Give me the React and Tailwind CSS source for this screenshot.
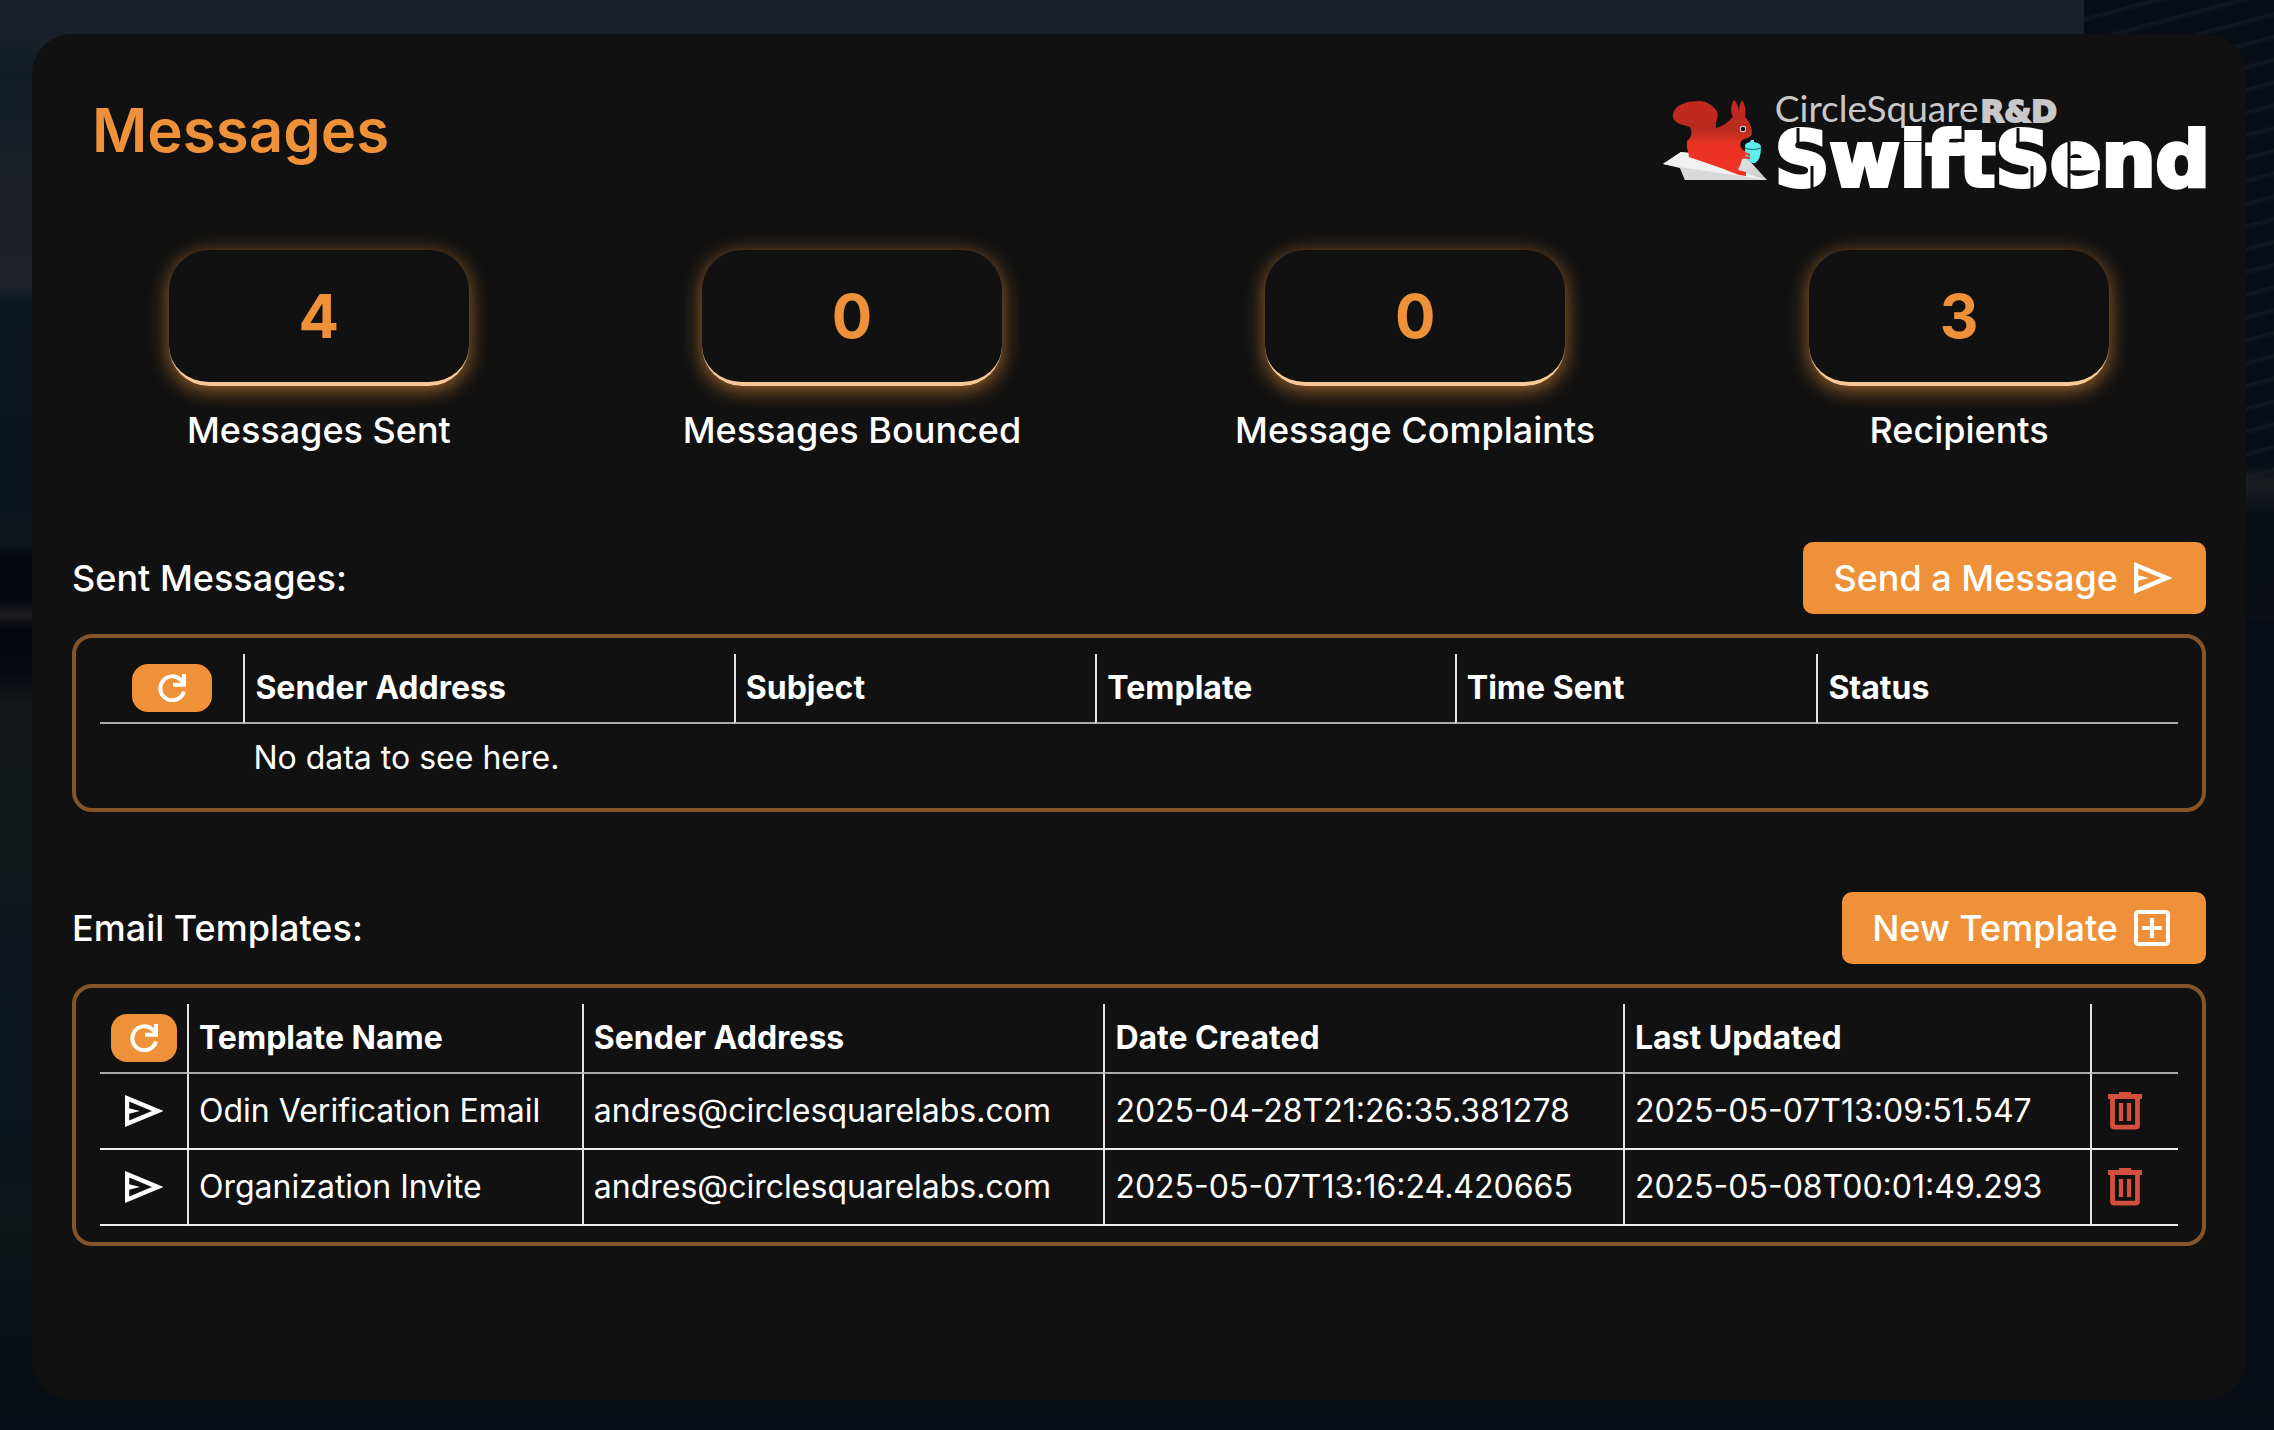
import React from "react";

function SendIcon() {
  return (
    <svg viewBox="0 0 38 32" className="h-8 w-[38px]" fill="none" aria-hidden="true">
      <path d="M2 3.2V28.8L32.6 16Z" stroke="currentColor" strokeWidth="4.4" />
      <path d="M3 13L15 16L3 19Z" fill="currentColor" />
    </svg>
  );
}

function AddBoxIcon() {
  return (
    <svg viewBox="0 0 36 36" className="mr-0.5 size-9" fill="none" stroke="currentColor" strokeWidth="4" aria-hidden="true">
      <rect x="2" y="2" width="32" height="32" rx="2.5" />
      <path d="M18 8V28M8 18H28" />
    </svg>
  );
}

function RefreshIcon() {
  return (
    <svg viewBox="0 0 28 28" className="size-7" fill="none" stroke="currentColor" strokeWidth="4" aria-hidden="true">
      <path d="M25.9 17.5A12 12 0 1 1 22.6 5.6L26 9.5" />
      <path d="M26 0V10.8H15" />
    </svg>
  );
}

function TrashIcon() {
  return (
    <svg viewBox="0 0 34 38" className="h-[38px] w-[34px]" fill="none" stroke="currentColor" aria-hidden="true">
      <path d="M0 4.5H34" strokeWidth="5" />
      <path d="M11 1.5H23" strokeWidth="3" />
      <path d="M4.5 6V33.5Q4.5 35.2 6.5 35.2H27.5Q29.5 35.2 29.5 33.5V6" strokeWidth="4.8" />
      <path d="M13 11V29M21 11V29" strokeWidth="4.2" />
    </svg>
  );
}

function Squirrel() {
  return (
    <svg viewBox="0 0 104 84" className="mt-1 h-[84px] w-[104px] shrink-0" aria-hidden="true">
      <defs>
        <linearGradient id="fur" x1="0" y1="0" x2="0" y2="1">
          <stop offset="0" stopColor="#c4281f" />
          <stop offset="0.4" stopColor="#b92b20" />
          <stop offset="0.58" stopColor="#ea3323" />
          <stop offset="1" stopColor="#ee3424" />
        </linearGradient>
        <linearGradient id="paper" x1="0" y1="0" x2="1" y2="1">
          <stop offset="0" stopColor="#ffffff" />
          <stop offset="1" stopColor="#c9c9cc" />
        </linearGradient>
      </defs>
      <path d="M0 66L18 54L84 60L104 82H22L17 70Z" fill="url(#paper)" />
      <path d="M17 69L22 82H66L104 82Z" fill="#d9d9dc" />
      <path d="M0 66L18 54L104 82L17 69Z" fill="#f1f1f2" />
      <path
        d="M10 20C9 13 14 7 22 5C25 3 31 4 36 3C44 3 50 8 54 13C56 20 52 24 53 30C60 28 65 24 70 19C67 14 68 6 71 2C74 5 75 8 76 13C76 9 77 5 79 2C83 8 83 14 82 19C86 23 89 29 89 35C88 40 83 40 79 42C76 46 77 49 80 52L87 55V59L79 61C78 66 76 69 75 72L83 74V78L76 77L58 70L26 59C26 55 23 50 24 43C28 40 30 35 27 29C20 27 13 26 10 20Z"
        fill="url(#fur)"
      />
      <circle cx="80" cy="31" r="3.2" fill="#ddd" />
      <circle cx="80" cy="31" r="2.3" fill="#111" />
      <path d="M82 48Q82 45 87 44L88 42H91L91 44Q98 45 98 49Q98 62 92 65Q88 66 84 62Q82 58 82 48Z" fill="#5fecec" />
      <path d="M82 50Q89 53 98 50" fill="none" stroke="#157f83" strokeWidth="1.2" />
      <path d="M79 54L87 57M79 59L87 60" stroke="#e63a2c" strokeWidth="2.4" />
    </svg>
  );
}

function Logo() {
  return (
    <a href="#home" className="mr-[-4px] flex items-start" aria-label="CircleSquare R&D SwiftSend">
      <Squirrel />
      <span className="relative ml-2 flex flex-col font-['DejaVu_Sans',sans-serif]">
        <span className="flex h-[34px] items-baseline leading-7 text-[#c8c8c8]">
          <span className="font-[Lato,sans-serif] text-[37px]">CircleSquare</span>
          <span className="ml-0.5 text-[31px] font-bold [-webkit-text-stroke:2px_#c8c8c8]">R&amp;D</span>
        </span>
        <span className="h-16 text-[76px] leading-[64px] font-bold text-white [-webkit-text-stroke:4px_white]">SwiftSend</span>
        <svg viewBox="0 0 436 64" className="absolute top-[34px] left-0 h-16 w-[436px]" stroke="#111111" strokeWidth="3" aria-hidden="true">
          <path d="M23 0V20M37 38V62M243 0V20M257 38V62M294 14V62" />
        </svg>
      </span>
    </a>
  );
}

const stats = [
  ["4", "Messages Sent"],
  ["0", "Messages Bounced"],
  ["0", "Message Complaints"],
  ["3", "Recipients"],
];

function Stat({ value, label }) {
  return (
    <div className="flex flex-col items-center gap-5">
      <div className="flex h-[136px] w-[300px] items-center justify-center rounded-[40px] border-b-4 border-[#f8c796] text-[60px] font-bold text-[#ef9138] shadow-[0_4px_20px_#ef9138a8]">
        {value}
      </div>
      <div className="text-[36px] leading-12 font-medium">{label}</div>
    </div>
  );
}

function SectionHeader({ title, action, icon }) {
  return (
    <div className="flex items-center justify-between">
      <h2 className="text-[36px] leading-12 font-medium">{title}</h2>
      <button className="flex h-[72px] items-center gap-4 rounded-[10px] bg-[#ef9138] pr-[34px] pl-[30px] text-[36px] font-medium">
        {action}
        {icon}
      </button>
    </div>
  );
}

function RefreshButton({ width }) {
  return (
    <button aria-label="Refresh" className={`mx-auto flex h-12 items-center justify-center rounded-2xl bg-[#ef9138] ${width}`}>
      <RefreshIcon />
    </button>
  );
}

const headLine = "border-b-2 border-b-[#aaaaaa]";
const side = "border-l-2 border-l-[#e4e4e4] pl-[10px]";

function TableBox({ children }) {
  return <div className="mt-5 rounded-[20px] border-4 border-[#855427] px-6 py-4">{children}</div>;
}

const templates = [
  ["Odin Verification Email", "andres@circlesquarelabs.com", "2025-04-28T21:26:35.381278", "2025-05-07T13:09:51.547"],
  ["Organization Invite", "andres@circlesquarelabs.com", "2025-05-07T13:16:24.420665", "2025-05-08T00:01:49.293"],
];

const tableClass = "w-full table-fixed border-separate border-spacing-0 text-left text-[32px] leading-10";

function Skyline() {
  return (
    <div className="absolute inset-0 bg-[linear-gradient(180deg,#1b2128_0%,#1a2027_3%,#101c24_5%,#1c2027_11%,#1e2128_20%,#0c1822_21%,#0a131c_34%,#10161b_38%,#04070e_39%,#05080f_42%,#1e1c1e_43%,#04070e_44%,#060910_47%,#14181a_49%,#13191b_60%,#0c1420_72%,#0d1517_86%,#080d15_100%)]">
      <div className="ml-auto h-[620px] w-[190px] bg-[linear-gradient(180deg,transparent_0%,transparent_75%,#1b1e21_78%,#0a0f16_83%,#0c1016_100%),repeating-linear-gradient(165deg,#090e16_0px,#090e16_16px,#13181f_18px,#0b1119_22px)]" />
      <div className="ml-auto h-[780px] w-[60px] bg-[linear-gradient(180deg,#070c15,#080d16)]" />
    </div>
  );
}

export default function App() {
  return (
    <div className="relative min-h-screen overflow-hidden bg-[#080d15] pt-[34px] pr-[28px] pb-[30px] pl-8 font-[Inter,sans-serif] text-white">
      <Skyline />
      <main className="relative min-h-[1366px] rounded-[40px] bg-[#111111] px-[30px] pt-[60px]">
        <header className="mr-[10px] flex h-[92px] justify-between pl-[30px]">
          <h1 className="text-[60px] leading-[72px] font-semibold text-[#ef9138]">Messages</h1>
          <Logo />
        </header>
        <section className="mt-16 flex justify-around" aria-label="Statistics">
          {stats.map(([value, label]) => (
            <Stat key={label} value={value} label={label} />
          ))}
        </section>
        <section className="mx-[10px] mt-[88px]">
          <SectionHeader title="Sent Messages:" action="Send a Message" icon={<SendIcon />} />
          <TableBox>
            <table className={tableClass}>
              <colgroup>
                <col className="w-[6.9%]" />
                <col className="w-[23.6%]" />
                <col className="w-[17.4%]" />
                <col className="w-[17.3%]" />
                <col className="w-[17.4%]" />
                <col />
              </colgroup>
              <thead>
                <tr className="h-[70px]">
                  <th className={headLine}>
                    <RefreshButton width="w-20" />
                  </th>
                  {["Sender Address", "Subject", "Template", "Time Sent", "Status"].map((h) => (
                    <th key={h} className={`font-bold ${headLine} ${side}`}>{h}</th>
                  ))}
                </tr>
              </thead>
              <tbody>
                <tr className="h-[68px]">
                  <td />
                  <td colSpan={5} className="pl-[10px]">No data to see here.</td>
                </tr>
              </tbody>
            </table>
          </TableBox>
        </section>
        <section className="mx-[10px] mt-20">
          <SectionHeader title="Email Templates:" action="New Template" icon={<AddBoxIcon />} />
          <TableBox>
            <table className={tableClass}>
              <colgroup>
                <col className="w-[87px]" />
                <col className="w-[19%]" />
                <col className="w-[25.1%]" />
                <col className="w-[25%]" />
                <col className="w-[22.5%]" />
                <col />
              </colgroup>
              <thead>
                <tr className="h-[70px]">
                  <th className={headLine}>
                    <RefreshButton width="w-[66px]" />
                  </th>
                  {["Template Name", "Sender Address", "Date Created", "Last Updated", ""].map((h) => (
                    <th key={h} className={`font-bold ${headLine} ${side}`}>{h}</th>
                  ))}
                </tr>
              </thead>
              <tbody>
                {templates.map((row) => (
                  <tr key={row[0]} className="h-[76px]">
                    <td className="border-b-2 border-[#eeeeee]">
                      <button aria-label={`Send ${row[0]}`} className="mx-auto block">
                        <SendIcon />
                      </button>
                    </td>
                    {row.map((cell) => (
                      <td key={cell} className={`border-b-2 border-b-[#eeeeee] ${side}`}>{cell}</td>
                    ))}
                    <td className="border-b-2 border-l-2 border-b-[#eeeeee] border-l-[#e4e4e4] pl-4">
                      <button aria-label={`Delete ${row[0]}`} className="block text-[#d54f3d]">
                        <TrashIcon />
                      </button>
                    </td>
                  </tr>
                ))}
              </tbody>
            </table>
          </TableBox>
        </section>
      </main>
    </div>
  );
}
